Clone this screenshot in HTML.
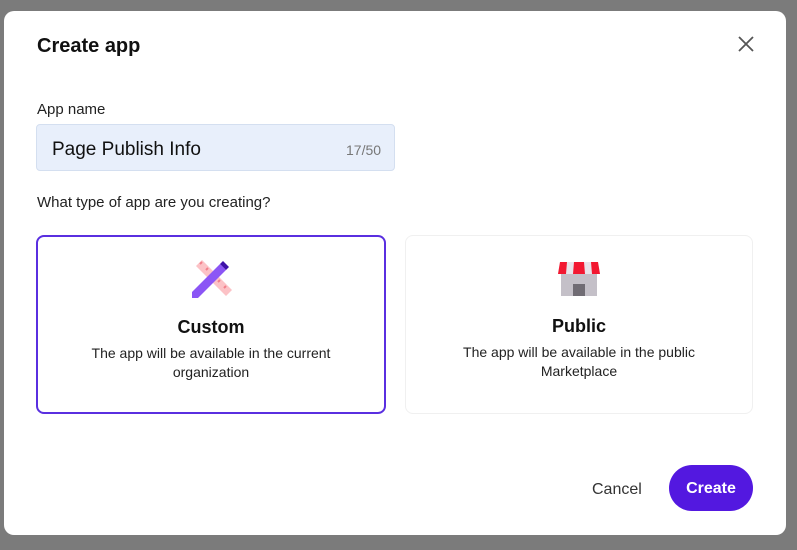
<!DOCTYPE html>
<html><head><style>
body{margin:0;width:797px;height:550px;background:#7b7b7b;font-family:"Segoe UI","Liberation Sans",sans-serif;position:relative;overflow:hidden}
.dlg{position:absolute;left:4px;top:11px;width:782px;height:524px;background:#fff;border-radius:10px}
.abs{position:absolute}
.card{position:absolute;top:235px;height:179px;box-sizing:border-box;border-radius:8px;text-align:center}
.card h3{margin:0;position:absolute;top:80px;left:0;right:0;font-size:18px;font-weight:700;color:#111}
.card p{margin:0;position:absolute;top:107px;left:0;right:0;font-size:14px;line-height:19px;color:#222}
</style></head><body>
<div class="dlg"></div>
<div class="abs" style="left:37px;top:35px;font-size:20px;font-weight:600;color:#111">Create app</div>
<svg class="abs" style="left:737px;top:35px" width="18" height="18"><path d="M2 2L16 16M16 2L2 16" stroke="#555" stroke-width="1.8"/></svg>
<div class="abs" style="left:37px;top:101px;font-size:15px;color:#222">App name</div>
<div class="abs" style="left:36px;top:124px;width:359px;height:47px;box-sizing:border-box;background:#e8effb;border:1px solid #d4dff0;border-radius:4px"></div>
<div class="abs" style="left:52px;top:139px;font-size:19px;color:#111">Page Publish Info</div>
<div class="abs" style="left:346px;top:142px;font-size:14px;color:#777">17/50</div>
<div class="abs" style="left:37px;top:194px;font-size:15px;color:#222">What type of app are you creating?</div>
<div class="card" style="left:36px;width:350px;border:2px solid #5a2fe0">
<svg class="abs" style="left:152px;top:21px" width="44" height="44" viewBox="0 0 44 44"><path d="M6 8L12 2L42 32L36 38Z" fill="#fcc2c6"/><path d="M10 6l2-2M16 12l2-2M22 18l2-2M28 24l2-2M34 30l2-2" stroke="#f27f8a" stroke-width="2"/><path d="M2 34L30 6L36 12L8 40L2 40Z" fill="#8b55f5"/><path d="M30 6L33 3L39 9L36 12Z" fill="#3e12a8"/></svg>
<h3>Custom</h3><p>The app will be available in the current<br>organization</p></div>
<div class="card" style="left:405px;width:348px;border:1px solid #f0f0f0">
<svg class="abs" style="left:152px;top:24px" width="42" height="38" viewBox="0 0 42 38"><rect x="3" y="12" width="36" height="24" fill="#c4c0c8"/><rect x="15" y="24" width="12" height="12" fill="#706c74"/><path d="M2 2h38l2 12H0Z" fill="#e8e4ea"/><path d="M2 2h7l-1 12H0Z M16 2h10l1 12H15Z M33 2h7l2 12H34Z" fill="#f21831"/></svg>
<h3>Public</h3><p>The app will be available in the public<br>Marketplace</p></div>
<div class="abs" style="left:592px;top:481px;font-size:16px;color:#333">Cancel</div>
<div class="abs" style="left:669px;top:465px;width:84px;height:46px;background:#5318e0;border-radius:23px;color:#fff;font-size:16px;font-weight:600;text-align:center;line-height:48px">Create</div>
</body></html>
